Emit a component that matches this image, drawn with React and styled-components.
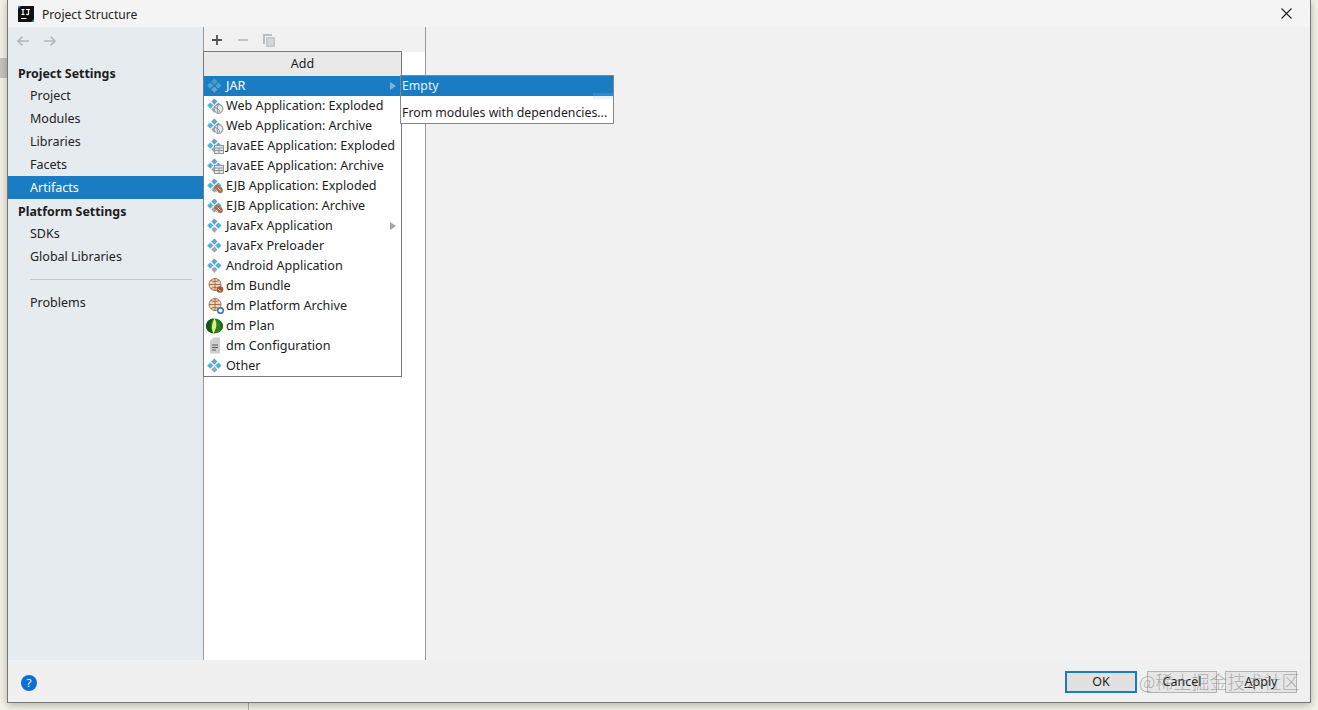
import styled, { createGlobalStyle } from "styled-components";

const GlobalStyle = createGlobalStyle`
  *, *::before, *::after { box-sizing: border-box; }
  html, body { margin: 0; padding: 0; }
  body {
    font-family: "Noto Sans", "Noto Sans CJK SC", sans-serif;
    font-size: 13px;
    color: #1c1c1c;
    overflow: hidden;
  }
`;

const Desktop = styled.div`
  position: relative;
  width: 1318px;
  height: 710px;
  background: #f4f2e7;
  overflow: hidden;
`;
const BackdropStripe = styled.div`
  position: absolute;
  left: 0;
  top: 58px;
  width: 8px;
  height: 20px;
  background: #c4c3bd;
`;
const BackdropLine = styled.div`
  position: absolute;
  left: 248px;
  top: 702px;
  width: 1px;
  height: 8px;
  background: #b5b3aa;
`;
const Window = styled.div`
  position: relative;
  margin-left: 7px;
  width: 1304px;
  height: 703px;
  border: 1px solid #77777a;
  border-top: 0;
  background: #f1f1f1;
  display: flex;
  flex-direction: column;
  box-shadow: 0 2px 8px rgba(0, 0, 0, 0.28);
`;
const TitleBar = styled.header`
  height: 27px;
  flex: none;
  display: flex;
  align-items: center;
  padding: 0 18px 0 10px;
  gap: 8px;
  background: #f4f4f4;
`;
const TitleText = styled.span`
  flex: 1;
  padding-top: 2px;
  font-size: 12.1px;
  color: #222;
`;
const Main = styled.div`
  flex: 1;
  display: flex;
  min-height: 0;
`;
const Sidebar = styled.nav`
  width: 195px;
  flex: none;
  background: #e6ebf0;
  display: flex;
  flex-direction: column;
`;
const NavArrows = styled.div`
  height: 28px;
  flex: none;
  display: flex;
  align-items: center;
  gap: 11px;
  padding-left: 7px;
  margin-bottom: 7px;
`;
const SectionTitle = styled.div`
  height: 22px;
  line-height: 24px;
  margin-top: ${(p) => (p.$spaced ? "1px" : "0")};
  padding-left: 10px;
  font-weight: 700;
  font-size: 12.4px;
  color: #1c1c1c;
`;
const NavItem = styled.div`
  height: 23px;
  line-height: 24px;
  padding-left: 22px;
  font-size: 12.5px;
  background: ${(p) => (p.$active ? "#1a7dc4" : "transparent")};
  color: ${(p) => (p.$active ? "#fff" : "#222")};
`;
const NavDivider = styled.div`
  height: 1px;
  flex: none;
  margin: 11px 11px 11px 22px;
  background: #c6c9cc;
`;
const MiddlePanel = styled.section`
  position: relative;
  width: 223px;
  flex: none;
  border-left: 1px solid #97999b;
  border-right: 1px solid #97999b;
  display: flex;
  flex-direction: column;
`;
const Toolbar = styled.div`
  height: 25px;
  flex: none;
  display: flex;
  align-items: center;
  gap: 10px;
  padding-left: 5px;
  background: #f1f1f1;
`;
const ListArea = styled.div`
  flex: 1;
  background: #fff;
`;
const RightPanel = styled.section`
  flex: 1;
  background: #f1f1f1;
`;
const Footer = styled.footer`
  height: 42px;
  flex: none;
  display: flex;
  align-items: flex-start;
  justify-content: space-between;
  padding: 11px 13px 0 13px;
  background: #f0f0f0;
`;
const HelpBadge = styled.div`
  width: 16px;
  height: 16px;
  margin-top: 4px;
  border-radius: 50%;
  background: #0b6fd4;
  color: #fff;
  font-size: 11.5px;
  line-height: 16px;
  text-align: center;
`;
const ButtonRow = styled.div`
  display: flex;
  gap: 8px;
`;
const DialogButton = styled.div`
  width: ${(p) => p.$width}px;
  height: 22px;
  border: ${(p) => (p.$primary ? "2px solid #1a7dc4" : "1px solid #b4b4b4")};
  background: ${(p) => (p.$primary ? "#e1e1e1" : "#e6e6e6")};
  font-size: 12.5px;
  line-height: ${(p) => (p.$primary ? "17px" : "19px")};
  text-align: center;
  color: #1c1c1c;
  margin-right: ${(p) => (p.$primary ? "2px" : "0")};
  & u { text-underline-offset: 1px; }
`;
const Watermark = styled.div`
  position: absolute;
  left: 1139px;
  top: 667px;
  font-family: "Noto Sans CJK SC", sans-serif;
  font-size: 18px;
  font-weight: 300;
  line-height: 28px;
  white-space: nowrap;
  color: rgba(120, 120, 120, 0.55);
`;

const Menu = styled.div`
  position: absolute;
  left: -1px;
  top: 24px;
  width: 199px;
  border: 1px solid #77797b;
  background: #fff;
`;
const MenuHeader = styled.div`
  height: 24px;
  line-height: 23px;
  text-align: center;
  background: #e9e9e9;
  font-size: 12.5px;
`;
const MenuRow = styled.div`
  height: 20px;
  display: flex;
  align-items: center;
  padding-left: 3px;
  font-size: 12.6px;
  white-space: nowrap;
  background: ${(p) => (p.$active ? "#1a7dc4" : "#fff")};
  color: ${(p) => (p.$active ? "#fff" : "#1c1c1c")};
`;
const RowIcon = styled.svg`
  width: 19px;
  height: 18px;
  flex: none;
`;
const WideIcon = styled(RowIcon)`
  margin-left: -1px;
  margin-right: 1px;
`;
const RowLabel = styled.span`
  flex: 1;
  padding-bottom: 2px;
`;
const Caret = styled.span`
  flex: none;
  width: 0;
  height: 0;
  margin-right: 5px;
  border-left: 6px solid ${(p) => (p.$active ? "#7fb3da" : "#a3a3a3")};
  border-top: 4px solid transparent;
  border-bottom: 4px solid transparent;
`;
const SubMenu = styled.div`
  position: absolute;
  left: 196px;
  top: 48px;
  width: 214px;
  height: 49px;
  border: 1px solid #85878a;
  background: #fff;
  &::after {
    content: "";
    position: absolute;
    right: 0;
    top: 17px;
    width: 20px;
    height: 6px;
    background: rgba(150, 190, 225, 0.2);
  }
`;
const SubRow = styled.div`
  height: ${(p) => (p.$active ? "20px" : "21px")};
  line-height: ${(p) => (p.$active ? "20px" : "21px")};
  margin-top: ${(p) => (p.$active ? "0" : "6px")};
  padding-left: 1px;
  font-size: 12.3px;
  white-space: nowrap;
  background: ${(p) => (p.$active ? "#1a7dc4" : "#fff")};
  color: ${(p) => (p.$active ? "#e8f3fb" : "#1c1c1c")};
`;

const Diamonds = ({ dim }) => (
  <g transform="translate(0 1) scale(0.92)" opacity={dim ? 0.75 : 1}>
    <path d="M8 0.5l3.4 3.4L8 7.3 4.6 3.9z" fill="#6c9fc0" />
    <path d="M3.6 4.8l3.4 3.4-3.4 3.4L0.2 8.2z" fill="#4fb3de" />
    <path d="M12.4 4.8l3.4 3.4-3.4 3.4L9 8.2z" fill="#4fb3de" />
    <path d="M8 9.2l3.4 3.4L8 16l-3.4-3.4z" fill="#9ba8b2" />
  </g>
);

const ArtifactIcon = ({ kind, dim }) => (
  <RowIcon viewBox="0 0 19 18">
    <Diamonds dim={dim} />
    {kind === "web" && (
      <g>
        <circle cx="11.5" cy="12" r="4.4" fill="#e8e8e8" stroke="#7f8a92" />
        <path d="M7.8 10.5c2.5 0.5 4.5 2 5.2 5M11 8c-1.2 2.5-1 5.5 0 8" fill="none" stroke="#7f8a92" strokeWidth="0.9" />
      </g>
    )}
    {kind === "ee" && (
      <g>
        <rect x="7.5" y="8.5" width="9" height="8" fill="#e4e6e8" stroke="#8e979e" />
        <path d="M7.5 11h9M7.5 13.5h9M12 11v5.5" stroke="#8e979e" fill="none" />
      </g>
    )}
    {kind === "ejb" && (
      <g>
        <ellipse cx="11.5" cy="12" rx="5" ry="3.4" transform="rotate(40 11.5 12)" fill="#ad6f4e" />
        <path d="M8.5 12.5l3 3M10.5 10.5l3 3" stroke="#ecd9c8" fill="none" />
      </g>
    )}
  </RowIcon>
);

const GlobeIcon = ({ badge }) => (
  <RowIcon viewBox="0 0 19 18">
    <circle cx="8" cy="7.5" r="6" fill="#eed3b8" stroke="#a8784f" />
    <path d="M2 7.5h12M8 1.5v12M4 3.5c2.7 1.4 5.300 1.400 8 0M4 11.500c2.700-1.400 5.300-1.400 8 0" fill="none" stroke="#9a6a48" strokeWidth="0.9" />
    {badge === "brown" && (
      <g>
        <circle cx="13" cy="12.500" r="3.300" fill="#a0583a" />
        <path d="M11 12l3 2.500" stroke="#e7d0bd" strokeWidth="0.8" fill="none" />
      </g>
    )}
    {badge === "blue" && <circle cx="13.500" cy="13.500" r="2.800" fill="#fff" stroke="#2a6cb8" strokeWidth="1.400" />}
  </RowIcon>
);

const PlanIcon = () => (
  <WideIcon viewBox="0 0 19 18">
    <ellipse cx="8.500" cy="9" rx="8.500" ry="7.500" fill="#2f7f20" />
    <path d="M7 1.600C3 2.200 0 5.200 0 9s3 6.800 7 7.400C4.800 13.500 4.200 10.500 4.800 8 5.200 5.800 6 3.500 7 1.600z" fill="#14561a" />
    <path d="M8.500 1.500c1.600 2.500 2.200 5 1.800 7.600-.4 2.700-1.500 5-2.800 7.300C6.200 14 5.700 11.500 6 9c.3-2.700 1.200-5.200 2.500-7.500z" fill="#e2ee8a" />
    <path d="M13 3c2 1.500 4 3.500 4 6s-1.500 4.500-3.500 5.800c1-2 1.500-4 1.300-6-.2-2-.9-4-1.800-5.800z" fill="#1d6518" />
  </WideIcon>
);

const ConfigIcon = () => (
  <RowIcon viewBox="0 0 19 18">
    <path d="M6.500 0.500H13V16.500H3V4z" fill="#cfcfcf" />
    <path d="M5 8h6M5 10.500h6M5 13h4" stroke="#5c5c5c" fill="none" />
  </RowIcon>
);

const ArrowIcon = ({ flip }) => (
  <svg width="16" height="14" viewBox="0 0 16 14" style={flip ? { transform: "scaleX(-1)" } : undefined}>
    <path d="M14 7H3M7.500 2.500L3 7l4.500 4.500" fill="none" stroke="#b4b8bc" strokeWidth="1.7" />
  </svg>
);

const menuItems = [
  { label: "JAR", icon: <ArtifactIcon kind="plain" dim />, active: true, more: true },
  { label: "Web Application: Exploded", icon: <ArtifactIcon kind="web" /> },
  { label: "Web Application: Archive", icon: <ArtifactIcon kind="web" /> },
  { label: "JavaEE Application: Exploded", icon: <ArtifactIcon kind="ee" /> },
  { label: "JavaEE Application: Archive", icon: <ArtifactIcon kind="ee" /> },
  { label: "EJB Application: Exploded", icon: <ArtifactIcon kind="ejb" /> },
  { label: "EJB Application: Archive", icon: <ArtifactIcon kind="ejb" /> },
  { label: "JavaFx Application", icon: <ArtifactIcon kind="plain" />, more: true },
  { label: "JavaFx Preloader", icon: <ArtifactIcon kind="plain" /> },
  { label: "Android Application", icon: <ArtifactIcon kind="plain" /> },
  { label: "dm Bundle", icon: <GlobeIcon badge="brown" /> },
  { label: "dm Platform Archive", icon: <GlobeIcon badge="blue" /> },
  { label: "dm Plan", icon: <PlanIcon /> },
  { label: "dm Configuration", icon: <ConfigIcon /> },
  { label: "Other", icon: <ArtifactIcon kind="plain" /> },
];

const App = () => (
  <Desktop>
    <GlobalStyle />
    <BackdropStripe />
    <BackdropLine />
    <Window>
      <TitleBar>
        <svg width="16" height="16" viewBox="0 0 16 16">
          <rect width="16" height="16" fill="#111" />
          <path d="M0 0h3L0 3zM16 16h-3l3-3z" fill="#2a8fd0" />
          <path d="M3.500 3.500h3M5 3.500v5M3.500 8.500h3M8 3.500h4M10.500 3.500v4.200c0 1-1.400 1.200-2.300.4M3 12.500h5.500" fill="none" stroke="#fff" strokeWidth="1.200" />
        </svg>
        <TitleText>Project Structure</TitleText>
        <svg width="11" height="11" viewBox="0 0 11 11">
          <path d="M0.500 0.500l10 10M10.500 0.500l-10 10" stroke="#222" strokeWidth="1.100" />
        </svg>
      </TitleBar>
      <Main>
        <Sidebar>
          <NavArrows>
            <ArrowIcon />
            <ArrowIcon flip />
          </NavArrows>
          <SectionTitle>Project Settings</SectionTitle>
          <NavItem>Project</NavItem>
          <NavItem>Modules</NavItem>
          <NavItem>Libraries</NavItem>
          <NavItem>Facets</NavItem>
          <NavItem $active>Artifacts</NavItem>
          <SectionTitle $spaced>Platform Settings</SectionTitle>
          <NavItem>SDKs</NavItem>
          <NavItem>Global Libraries</NavItem>
          <NavDivider />
          <NavItem>Problems</NavItem>
        </Sidebar>
        <MiddlePanel>
          <Toolbar>
            <svg width="16" height="16" viewBox="0 0 16 16">
              <path d="M8 3v10M3 8h10" stroke="#4f5358" strokeWidth="1.800" fill="none" />
            </svg>
            <svg width="16" height="16" viewBox="0 0 16 16">
              <path d="M3 8h10" stroke="#b9bcc0" strokeWidth="1.800" fill="none" />
            </svg>
            <svg width="16" height="16" viewBox="0 0 16 16">
              <path d="M2 2h9v2H4v8H2z" fill="#b9bcc0" />
              <rect x="5" y="5" width="9" height="10" fill="#c6c9cc" />
              <path d="M7 8h5M7 10h5M7 12h5" stroke="#e8e8e8" fill="none" />
            </svg>
          </Toolbar>
          <ListArea />
          <Menu>
            <MenuHeader>Add</MenuHeader>
            {menuItems.map((item) => (
              <MenuRow key={item.label} $active={item.active}>
                {item.icon}
                <RowLabel>{item.label}</RowLabel>
                {item.more && <Caret $active={item.active} />}
              </MenuRow>
            ))}
          </Menu>
          <SubMenu>
            <SubRow $active>Empty</SubRow>
            <SubRow>From modules with dependencies...</SubRow>
          </SubMenu>
        </MiddlePanel>
        <RightPanel />
      </Main>
      <Footer>
        <HelpBadge>?</HelpBadge>
        <ButtonRow>
          <DialogButton $primary $width={72}>OK</DialogButton>
          <DialogButton $width={70}>Cancel</DialogButton>
          <DialogButton $width={72}>
            <u>A</u>pply
          </DialogButton>
        </ButtonRow>
      </Footer>
    </Window>
    <Watermark>@稀土掘金技术社区</Watermark>
  </Desktop>
);

export default App;
